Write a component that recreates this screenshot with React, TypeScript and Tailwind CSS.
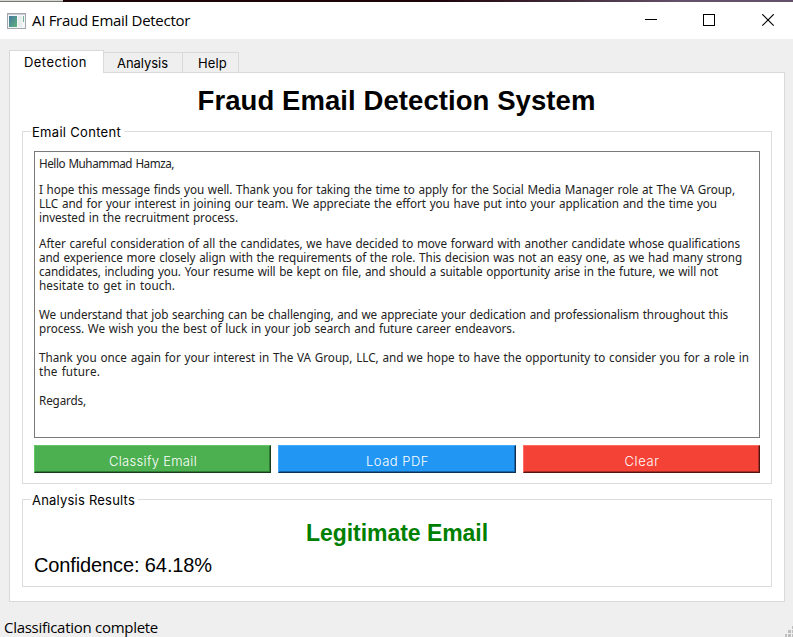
import { useLayoutEffect, useRef, useState } from "react";
import type { CSSProperties } from "react";

/* Single line of text whose tracking is adjusted so that it spans the given width. */
function Fit({ text, width, className = "" }: { text: string; width: number; className?: string }) {
  const ref = useRef<HTMLSpanElement>(null);
  const [spacing, setSpacing] = useState(0);
  useLayoutEffect(() => {
    if (ref.current) {
      const natural = ref.current.getBoundingClientRect().width;
      setSpacing((width - natural) / text.length);
    }
  }, []);
  const style: CSSProperties = { letterSpacing: `${spacing}px` };
  return (
    <span ref={ref} className={`inline-block whitespace-pre ${className}`} style={style}>
      {text}
    </span>
  );
}

const paragraphs: { gap: string; lines: [string, number][] }[] = [
  { gap: "", lines: [["Hello Muhammad Hamza,", 135]] },
  {
    gap: "mt-3",
    lines: [
      ["I hope this message finds you well. Thank you for taking the time to apply for the Social Media Manager role at The VA Group,", 696],
      ["LLC and for your interest in joining our team. We appreciate the effort you have put into your application and the time you", 678],
      ["invested in the recruitment process.", 199],
    ],
  },
  {
    gap: "mt-3",
    lines: [
      ["After careful consideration of all the candidates, we have decided to move forward with another candidate whose qualifications", 701],
      ["and experience more closely align with the requirements of the role. This decision was not an easy one, as we had many strong", 703],
      ["candidates, including you. Your resume will be kept on file, and should a suitable opportunity arise in the future, we will not", 679],
      ["hesitate to get in touch.", 136],
    ],
  },
  {
    gap: "mt-[15px]",
    lines: [
      ["We understand that job searching can be challenging, and we appreciate your dedication and professionalism throughout this", 689],
      ["process. We wish you the best of luck in your job search and future career endeavors.", 476],
    ],
  },
  {
    gap: "mt-[15px]",
    lines: [
      ["Thank you once again for your interest in The VA Group, LLC, and we hope to have the opportunity to consider you for a role in", 710],
      ["the future.", 61],
    ],
  },
  { gap: "mt-[15px]", lines: [["Regards,", 47]] },
];

const ui = "font-['Inter','Liberation_Sans',sans-serif] text-[13px] leading-4";

export default function App() {
  return (
    <div className="flex h-[637px] w-[793px] flex-col overflow-hidden bg-[#efefef] text-black">
      <div className="flex h-0.5 shrink-0">
        <div className="w-[63px] border-b border-[#777] bg-[#d5d5d0]" />
        <div className="flex-1 bg-linear-to-r from-[#1a0408] from-50% to-[#65516b] to-85%" />
      </div>
      <header className="flex h-[37px] shrink-0 items-center bg-white pl-[7px]">
        <svg width="19" height="16" viewBox="0 0 19 16" className="shrink-0">
          <rect x="0.5" y="0.5" width="18" height="15" fill="#f4f6f8" stroke="#a3a8b0" />
          <rect x="1" y="1" width="17" height="1" fill="#c9ced5" />
          <defs>
            <linearGradient id="pane" x1="0" y1="0" x2="1" y2="1">
              <stop offset="0" stopColor="#4477a0" />
              <stop offset="1" stopColor="#5db27b" />
            </linearGradient>
          </defs>
          <rect x="2" y="3" width="8" height="11" fill="url(#pane)" />
          <rect x="11" y="3" width="4" height="11" fill="#e7eded" />
          <rect x="16" y="3" width="1" height="6" fill="#75b398" />
        </svg>
        <h1 className="ml-1.5 flex pb-0.5 font-['Open_Sans',sans-serif] text-[15px] leading-5">
          <Fit text="AI Fraud Email Detector" width={158} />
        </h1>
        <svg width="134" height="13" viewBox="0 0 134 13" className="mr-[17px] ml-auto" fill="none" stroke="#000" shapeRendering="crispEdges">
          <path d="M3 5.5h12M61.5 0.5h11v11h-11z" />
          <path d="M120.3 0.3l11.4 11.4M131.7 0.3l-11.4 11.4" shapeRendering="auto" strokeWidth="1.15" />
        </svg>
      </header>

      <div className="flex h-[33px] shrink-0 items-end pl-[9px]">
        <div className={`relative z-10 -mb-px flex h-[23px] w-[95px] shrink-0 border border-b-0 border-[#d9d9d9] bg-white pt-[3px] pl-[14px] ${ui}`}>
          <Fit text="Detection" width={63} />
        </div>
        <div className={`flex h-5 w-[79px] shrink-0 border-t border-r border-[#d9d9d9] pt-[2px] pl-[13px] ${ui}`}>
          <Fit text="Analysis" width={51} />
        </div>
        <div className={`flex h-5 w-14 shrink-0 border-t border-r border-[#d9d9d9] pt-[2px] pl-[15px] ${ui}`}>
          <Fit text="Help" width={29} />
        </div>
      </div>

      <main className="ml-[9px] flex h-[530px] w-[776px] shrink-0 flex-col border border-[#d9d9d9] bg-white px-3">
        <h2 className="mt-3 h-8 pr-px text-center font-['Liberation_Sans',sans-serif] text-[27.5px] leading-8 font-bold">
          <Fit text="Fraud Email Detection System" width={398} />
        </h2>

        <fieldset className="mt-[5px] h-[362px] min-w-0 shrink-0 border border-[#dcdcdc] px-[11px]">
          <legend className={`-ml-[3px] h-[18px] pr-[3px] pl-px pt-0.5 ${ui}`}>
            <Fit text="Email Content" width={89} className="h-4" />
          </legend>
          <div className="mt-[11px] h-[287px] border border-[#7a7a7a] bg-white pt-1 pl-1 font-['Noto_Sans',sans-serif] text-[11.7px] leading-[14px] text-[#222] [word-spacing:0.8px]">
            {paragraphs.map((p, i) => (
              <div key={i} className={p.gap}>
                {p.lines.map(([text, width]) => (
                  <div key={text} className="h-3.5">
                    <Fit text={text} width={width} />
                  </div>
                ))}
              </div>
            ))}
          </div>
          <div className={`mt-[7px] grid grid-cols-[237px_238px_237px] gap-[7px] text-white ${ui}`}>
            <button className="h-7 border border-t-[#65c569] border-r-[#193b1b] border-b-[#193b1b] border-l-[#65c569] bg-[#4caf50] pt-[3px] pl-px font-light shadow-[inset_-1px_-1px_0_#2f7d32]">
              <Fit text="Classify Email" width={88} />
            </button>
            <button className="h-7 border border-t-[#43aaff] border-r-[#0c3152] border-b-[#0c3152] border-l-[#43aaff] bg-[#2196f3] pt-[3px] pl-px font-light shadow-[inset_-1px_-1px_0_#1566a8]">
              <Fit text="Load PDF" width={63} />
            </button>
            <button className="h-7 border border-t-[#ff6b61] border-r-[#521511] border-b-[#521511] border-l-[#ff6b61] bg-[#f44336] pt-[3px] pl-px font-light shadow-[inset_-1px_-1px_0_#a82d24]">
              <Fit text="Clear" width={35} />
            </button>
          </div>
        </fieldset>

        <fieldset className="mt-[6px] h-[97px] min-w-0 shrink-0 border border-[#dcdcdc] px-[11px]">
          <legend className={`-ml-[3px] h-[18px] pr-[3px] pl-px pt-0.5 ${ui}`}>
            <Fit text="Analysis Results" width={103} className="h-4" />
          </legend>
          <div className="mt-[11px] text-center font-['Liberation_Sans',sans-serif] text-[23px] leading-7 font-bold text-[#008000]">
            <Fit text="Legitimate Email" width={182} />
          </div>
          <div className="mt-1.5 font-['Liberation_Sans',sans-serif] text-[20px] leading-6">
            <Fit text="Confidence: 64.18%" width={178} />
          </div>
        </fieldset>
      </main>

      <footer className="flex flex-1 items-end justify-between pl-1 font-['Open_Sans',sans-serif] text-[15px] leading-5">
        <Fit text="Classification complete" width={154} />
        <svg width="8" height="11" viewBox="0 0 8 11" fill="#bfbfbf" shapeRendering="crispEdges">
          <path d="M7 0h1v3h-1zM3 4h3v3h-3zM7 4h1v3h-1zM0 8h2v3h-2zM3 8h3v3h-3zM7 8h1v3h-1z" />
        </svg>
      </footer>
    </div>
  );
}
